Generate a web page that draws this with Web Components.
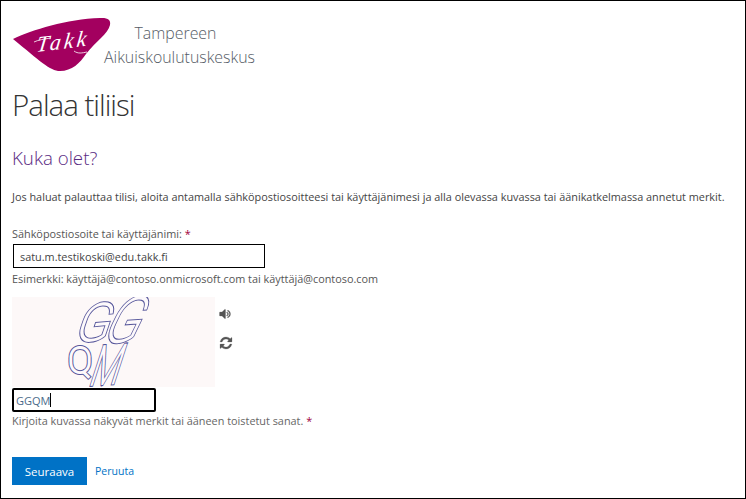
<!DOCTYPE html>
<html lang="fi">
<head>
<meta charset="utf-8">
<title>Palaa tiliisi</title>
<style>
  html, body { margin: 0; height: 100%; background: #fff; }
  body { font-family: "Open Sans", "Noto Sans", sans-serif; }
  recovery-page { height: 100%; }
</style>
</head>
<body>
<recovery-page>
  <brand-header></brand-header>
  <h1 slot="title">Palaa tiliisi</h1>
  <h2 slot="subtitle">Kuka olet?</h2>
  <span slot="intro">Jos haluat palauttaa tilisi, aloita antamalla sähköpostiosoitteesi tai käyttäjänimesi ja alla olevassa kuvassa tai äänikatkelmassa annetut merkit.</span>
  <email-field slot="form"></email-field>
  <captcha-box slot="form"></captcha-box>
  <captcha-field slot="form"></captcha-field>
  <form-actions slot="form"></form-actions>
</recovery-page>
<script>
class RecoveryPage extends HTMLElement {
  static {
    customElements.define('recovery-page', RecoveryPage);
  }
  constructor() {
    super();
    this.attachShadow({ mode: 'open' });
    this.shadowRoot.innerHTML = /* html */ `
    <style>
      :host {
        display: block;
        box-sizing: border-box;
        border: 1px solid #000;
        padding: 0 0 0 11px;
        overflow: hidden;
      }
      .title {
        margin-top: 14px;
        font-size: 29.5px;
        line-height: 38px;
        font-weight: 300;
        letter-spacing: -1px;
        color: #333;
      }
      .subtitle {
        margin-top: 22px;
        font-size: 18.7px;
        line-height: 24px;
        font-weight: 300;
        color: #5a2a82;
      }
      ::slotted(h1), ::slotted(h2) { font: inherit; margin: 0; }
      .intro {
        margin-top: 19px;
        font-size: 10.87px;
        line-height: 16px;
        color: #444;
        white-space: nowrap;
      }
      .form {
        margin-top: 21px;
        display: flex;
        flex-direction: column;
      }
    </style>
    <slot></slot>
    <div class="title"><slot name="title"></slot></div>
    <div class="subtitle"><slot name="subtitle"></slot></div>
    <div class="intro"><slot name="intro"></slot></div>
    <div class="form"><slot name="form"></slot></div>
    `;
  }
}

class BrandHeader extends HTMLElement {
  static {
    customElements.define('brand-header', BrandHeader);
  }
  constructor() {
    super();
    this.attachShadow({ mode: 'open' });
    this.shadowRoot.innerHTML = /* html */ `
    <style>
      :host {
        display: flex;
        align-items: flex-start;
        padding-top: 16px;
        height: 55px;
      }
      svg { display: block; flex: none; width: 99px; height: 56px; }
      .name {
        margin-left: -7px;
        padding-top: 4px;
        display: flex;
        flex-direction: column;
        align-items: center;
        font-size: 15.9px;
        line-height: 24px;
        font-weight: 300;
        color: #555c66;
      }
      .name span:first-child { margin-right: 8px; }
    </style>
    <svg viewBox="0 0 99 56">
      <path fill="#a3005f" d="M1 22C20 13 55 2 88 1C96 .5 99 3 98 8C96 17 84 24 74 37C68 46 60 54 48 54C38 54 28 44 1 22Z"/>
      <text font-family="Liberation Serif" font-style="italic" font-size="22" fill="#fff" textLength="50" transform="translate(24 35) rotate(-7) skewX(-14)">Takk</text>
      <path fill="none" stroke="#fff" stroke-width=".8" d="M22 25C26 23 32 22 39 21M62 34C66 37 70 36 75 35"/>
    </svg>
    <div class="name"><span>Tampereen</span><span>Aikuiskoulutuskeskus</span></div>
    `;
  }
}

class EmailField extends HTMLElement {
  static {
    customElements.define('email-field', EmailField);
  }
  constructor() {
    super();
    this.attachShadow({ mode: 'open' });
    this.shadowRoot.innerHTML = /* html */ `
    <style>
      :host {
        display: block;
        font-size: 10.87px;
        color: #555;
      }
      label { display: block; line-height: 16px; }
      i { font-style: normal; color: #a0003c; }
      input {
        display: block;
        box-sizing: border-box;
        width: 252px;
        height: 24px;
        margin: 2px 0 0 1px;
        padding: 0 6px;
        border: 1px solid #000;
        border-radius: 0;
        outline: 0;
        font: inherit;
        color: #444;
        background: #fff;
      }
      p { margin: 3px 0 0; line-height: 16px; }
    </style>
    <label for="email">Sähköpostiosoite tai käyttäjänimi: <i>*</i></label>
    <input id="email" value="satu.m.testikoski@edu.takk.fi">
    <p>Esimerkki: käyttäjä@contoso.onmicrosoft.com tai käyttäjä@contoso.com</p>
    `;
  }
}

class CaptchaBox extends HTMLElement {
  static {
    customElements.define('captcha-box', CaptchaBox);
  }
  constructor() {
    super();
    this.attachShadow({ mode: 'open' });
    this.shadowRoot.innerHTML = /* html */ `
    <style>
      :host {
        display: flex;
        gap: 4px;
        margin-top: 10px;
      }
      .pic { display: block; width: 203px; height: 90px; background: #fdf8f8; }
      .pic text { vector-effect: non-scaling-stroke; }
      .tools { display: flex; flex-direction: column; gap: 15px; padding-top: 10px; }
      .tools svg { display: block; width: 14px; height: 14px; fill: #555; stroke: #555; stroke-width: 30; }
    </style>
    <svg class="pic" viewBox="0 0 203 90">
      <defs>
        <g id="word" font-family="Roboto" font-weight="100">
          <text transform="translate(61 45) rotate(-5) skewX(-24)" font-size="50">G</text>
          <text transform="translate(88 46) rotate(-4) skewX(-30) scale(.85 1)" font-size="60">G</text>
          <text transform="translate(56 76)" font-size="36">Q</text>
          <text transform="translate(76 88) rotate(-4) skewX(-22) scale(.7 1.1)" font-size="48">M</text>
        </g>
      </defs>
      <use href="#word" fill="none" stroke="#55559a" stroke-width="3.800"/>
      <use href="#word" fill="none" stroke="#fdf9fb" stroke-width="1.800"/>
    </svg>
    <div class="tools">
      <svg viewBox="0 0 1792 1792"><path d="M832 352v1088q0 26-19 45t-45 19-45-19l-333-333h-262q-26 0-45-19t-19-45v-384q0-26 19-45t45-19h262l333-333q19-19 45-19t45 19 19 45zm384 544q0 76-42.500 141.500t-112.500 93.500q-10 5-25 5-26 0-45-18.500t-19-45.500q0-21 12-35.500t29-25 34-23 29-36 12-56.500-12-56.500-29-36-34-23-29-25-12-35.500q0-27 19-45.500t45-18.500q15 0 25 5 70 27 112.500 93t42.500 142zm256 0q0 153-85 282.500t-225 188.500q-13 5-25 5-27 0-46-19t-19-45q0-39 39-59 56-29 76-44 74-54 115.500-135.500t41.500-173.500-41.500-173.500-115.500-135.500q-20-15-76-44-39-20-39-59 0-26 19-45t45-19q13 0 26 5 140 59 225 188.500t85 282.500z"/></svg>
      <svg viewBox="0 0 1792 1792"><path d="M1639 1056q0 5-1 7-64 268-268 434.500t-478 166.500q-146 0-282.500-55t-243.500-155l-129 129q-19 19-45 19t-45-19-19-45v-448q0-26 19-45t45-19h448q26 0 45 19t19 45-19 45l-137 137q71 66 161 102t187 36q134 0 250-65t186-179q11-17 53-117 8-23 30-23h192q13 0 22.500 9.500t9.500 22.500zm25-800v448q0 26-19 45t-45 19h-448q-26 0-45-19t-19-45 19-45l138-138q-148-137-349-137-134 0-250 65t-186 179q-11 17-53 117-8 23-30 23h-199q-13 0-22.500-9.500t-9.500-22.500v-7q65-268 270-434.500t480-166.500q146 0 284 55.500t245 156.500l130-129q19-19 45-19t45 19 19 45z"/></svg>
    </div>
    `;
  }
}

class CaptchaField extends HTMLElement {
  static {
    customElements.define('captcha-field', CaptchaField);
  }
  constructor() {
    super();
    this.attachShadow({ mode: 'open' });
    this.shadowRoot.innerHTML = /* html */ `
    <style>
      :host {
        display: block;
        font-size: 10.87px;
        color: #666;
      }
      .box {
        box-sizing: border-box;
        width: 144px;
        height: 24px;
        margin-top: 1px;
        padding: 0 2px;
        display: flex;
        align-items: center;
        border: 2px solid #000;
        border-radius: 2px;
        font-size: 11px;
        color: #4a6a8a;
      }
      .caret { width: 1px; height: 14px; background: #000; }
      p { margin: 1px 0 0; line-height: 16px; }
      i { font-style: normal; color: #a0003c; }
    </style>
    <div class="box"><span>GGQM</span><span class="caret"></span></div>
    <p>Kirjoita kuvassa näkyvät merkit tai ääneen toistetut sanat. <i>*</i></p>
    `;
  }
}

class FormActions extends HTMLElement {
  static {
    customElements.define('form-actions', FormActions);
  }
  constructor() {
    super();
    this.attachShadow({ mode: 'open' });
    this.shadowRoot.innerHTML = /* html */ `
    <style>
      :host {
        display: flex;
        align-items: center;
        gap: 8px;
        margin-top: 28px;
      }
      button {
        width: 75px;
        height: 28px;
        padding: 0;
        border: 0;
        background: #0072c6;
        color: #fff;
        font: inherit;
        font-size: 11.5px;
      }
      a { color: #0072c6; font-size: 10.5px; text-decoration: none; }
    </style>
    <button type="button">Seuraava</button>
    <a href="#">Peruuta</a>
    `;
  }
}
</script>
</body>
</html>
